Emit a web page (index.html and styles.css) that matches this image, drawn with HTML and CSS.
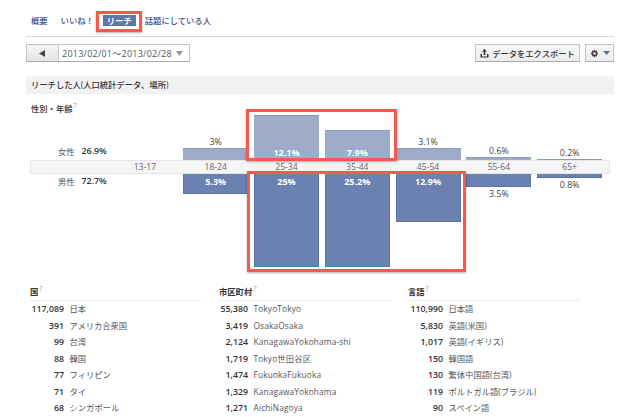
FILE: index.html
```html
<!DOCTYPE html>
<html lang="ja">
<head>
<meta charset="utf-8">
<title>リーチ</title>
<link rel="stylesheet" href="styles.css">
</head>
<body>
<div class="page">
  <nav class="tabs">
    <a class="tab">概要</a>
    <a class="tab">いいね！</a>
    <a class="tab active">リーチ</a>
    <a class="tab">話題にしている人</a>
    <span class="mark mark-tab"></span>
  </nav>
  <div class="toolbar">
    <div class="range">
      <span class="back"><svg width="9" height="9" viewBox="0 0 9 9"><path d="M1 4.500 7 1v7z" fill="#444"/></svg></span>
      <span class="dates">2013/02/01～2013/02/28</span>
      <svg class="caret" width="7" height="5" viewBox="0 0 7 5"><path d="M0 0h7L3.500 5z" fill="#999"/></svg>
    </div>
    <div class="actions">
      <button class="btn export"><svg width="9" height="9" viewBox="0 0 9 9"><path d="M4.500 0 7 2.600H5.300V6H3.700V2.600H2zM.5 5H2v2.500h5V5h1.500v3.500H.5z" fill="#333"/></svg>データをエクスポート</button>
      <button class="btn gear"><svg width="9" height="9" viewBox="0 0 9 9"><path d="M4 0h1l.3 1.300 1.200-.6.8.8-.6 1.200L8 3v1.500l-1.300.3.600 1.200-.8.800-1.200-.6L5 7.500 4 7.500l-.3-1.300-1.200.6-.8-.8.600-1.200L1 4.500V3l1.300-.3-.6-1.200.8-.8 1.200.6z" transform="translate(0 .7)" fill="#444"/><circle cx="4.500" cy="4.450" r="1.200" fill="#eee"/></svg><svg width="7" height="4" viewBox="0 0 7 4"><path d="M0 0h7L3.500 4z" fill="#5a6f9f"/></svg></button>
    </div>
  </div>
  <h2 class="section">リーチした人(人口統計データ、場所)</h2>
  <h3 class="subhead">性別・年齢<sup>?</sup></h3>

  <div class="chart">
    <div class="row female">
      <div class="legend"><span>女性</span><b>26.9%</b></div>
      <div class="col"></div>
      <div class="col"><span class="out">3%</span><div class="bar f h12"></div></div>
      <div class="col"><div class="bar f h45"><b>12.1%</b></div></div>
      <div class="col"><div class="bar f h30"><b>7.9%</b></div></div>
      <div class="col"><span class="out">3.1%</span><div class="bar f h12"></div></div>
      <div class="col"><span class="out">0.6%</span><div class="bar f h3"></div></div>
      <div class="col"><span class="out">0.2%</span><div class="bar f h1"></div></div>
    </div>
    <div class="ages">
      <div class="legend"></div>
      <span>13-17</span><span>18-24</span><span>25-34</span><span>35-44</span><span>45-54</span><span>55-64</span><span>65+</span>
    </div>
    <div class="row male">
      <div class="legend"><span>男性</span><b>72.7%</b></div>
      <div class="col"></div>
      <div class="col"><div class="bar m h20"><b>5.3%</b></div></div>
      <div class="col"><div class="bar m h93"><b>25%</b></div></div>
      <div class="col"><div class="bar m h93"><b>25.2%</b></div></div>
      <div class="col"><div class="bar m h48"><b>12.9%</b></div></div>
      <div class="col"><div class="bar m h13"></div><span class="out below">3.5%</span></div>
      <div class="col"><div class="bar m h4"></div><span class="out below">0.8%</span></div>
    </div>
    <span class="mark mark-f"></span>
    <span class="mark mark-m"></span>
  </div>

  <div class="lists">
    <section class="list l1">
      <h3>国<sup>?</sup></h3>
      <ul>
        <li><b>117,089</b><span>日本</span></li>
        <li><b>391</b><span>アメリカ合衆国</span></li>
        <li><b>99</b><span>台湾</span></li>
        <li><b>88</b><span>韓国</span></li>
        <li><b>77</b><span>フィリピン</span></li>
        <li><b>71</b><span>タイ</span></li>
        <li><b>68</b><span>シンガポール</span></li>
      </ul>
    </section>
    <section class="list l2">
      <h3>市区町村<sup>?</sup></h3>
      <ul>
        <li><b>55,380</b><span>TokyoTokyo</span></li>
        <li><b>3,419</b><span>OsakaOsaka</span></li>
        <li><b>2,124</b><span>KanagawaYokohama-shi</span></li>
        <li><b>1,719</b><span>Tokyo世田谷区</span></li>
        <li><b>1,474</b><span>FukuokaFukuoka</span></li>
        <li><b>1,329</b><span>KanagawaYokohama</span></li>
        <li><b>1,271</b><span>AichiNagoya</span></li>
      </ul>
    </section>
    <section class="list l3">
      <h3>言語<sup>?</sup></h3>
      <ul>
        <li><b>110,990</b><span>日本語</span></li>
        <li><b>5,830</b><span>英語(米国)</span></li>
        <li><b>1,017</b><span>英語(イギリス)</span></li>
        <li><b>150</b><span>韓国語</span></li>
        <li><b>130</b><span>繁体中国語(台湾)</span></li>
        <li><b>119</b><span>ポルトガル語(ブラジル)</span></li>
        <li><b>90</b><span>スペイン語</span></li>
      </ul>
    </section>
  </div>
</div>
</body>
</html>
```
FILE: styles.css
```css
* { box-sizing: border-box; }
html, body { margin: 0; height: 417px; overflow: hidden; background: #fff; }
body { font-family: "Open Sans", "Noto Sans CJK JP", sans-serif; font-size: 8.3px; color: #444; }
.page { width: 640px; padding: 0 26px; }

.tabs { position: relative; display: flex; align-items: center; height: 37px; padding: 5px 0 0 5px; border-bottom: 1px solid #d8d8d8; color: #3b5090; font-weight: 500; }
.tab { display: block; line-height: 11px; }
.tab:nth-child(1) { margin-right: 13px; }
.tab:nth-child(2) { margin-right: 9px; }
.tab:nth-child(3) { margin-right: 9px; }
.tab.active { width: 33px; background: #5d77ab; color: #fff; font-weight: 700; text-align: center; }
.mark { position: absolute; border: 3px solid #f9584f; box-shadow: 0 1px 2px rgba(0,0,0,.3); }
.mark-tab { left: 70px; top: 11px; width: 46px; height: 21px; }

.toolbar { display: flex; justify-content: space-between; margin-top: 7px; height: 18px; }
.range { display: flex; align-items: center; width: 164px; border: 1px solid #c4c4c4; border-bottom-color: #aaa; background: #fff; }
.back { display: flex; align-items: center; justify-content: center; width: 32px; height: 100%; border-right: 1px solid #c4c4c4; background: linear-gradient(#f5f5f5, #e4e4e4); }
.dates { margin-left: 3px; flex: 1; font-size: 9px; color: #555; letter-spacing: .25px; white-space: nowrap; }
.caret { margin-right: 6px; }
.actions { display: flex; gap: 5px; }
.btn { display: flex; align-items: center; justify-content: center; gap: 3px; height: 18px; padding: 0; border: 1px solid #c4c4c4; border-bottom-color: #aaa; background: linear-gradient(#f8f8f8, #ececec); font: inherit; font-weight: 500; color: #333; }
.export { width: 105px; }
.gear { width: 29px; gap: 4px; }

.section { margin: 14px 0 0; height: 18px; padding-left: 5px; background: #f2f2f2; font-size: 8.3px; font-weight: 500; line-height: 18px; color: #333; }
.subhead { margin: 9px 0 0 5px; height: 12px; font-size: 8.3px; font-weight: 500; line-height: 12px; color: #333; }
sup { font-size: 7.5px; font-weight: 400; color: #999; line-height: 0; margin-left: 1px; }

.chart { position: relative; margin-top: -6px; }
.row, .ages { display: grid; grid-template-columns: 80.600px repeat(7, 65px); column-gap: 5.800px; }
.female { height: 51px; align-items: end; }
.male { height: 100px; align-items: start; }
.col { display: flex; flex-direction: column; align-items: stretch; text-align: center; }
.out { font-size: 8.800px; line-height: 11px; color: #444; }
.below { margin-top: 2px; }
.bar { color: #fff; text-align: center; font-size: 9px; }
.bar.f { display: flex; align-items: flex-end; justify-content: center; padding-bottom: 2px; background: #9eacca; border-top: 1px solid #8c9bc0; }
.bar.m { padding-top: 2px; line-height: 11px; background: #6a81b1; border: 1px solid #5a72a6; border-top: 0; }
.h1 { height: 1px; padding: 0 !important; } .h3 { height: 3px; padding: 0 !important; } .h4 { height: 4px; padding: 0 !important; } .h12 { height: 12px; } .h13 { height: 13px; }
.h20 { height: 20px; } .h30 { height: 30px; } .h45 { height: 45px; } .h48 { height: 48px; } .h93 { height: 93px; }
.bar.f b { line-height: 11px; font-weight: 700; }

.legend { display: flex; justify-content: flex-end; gap: 7px; color: #555; line-height: 11px; }
.legend b { color: #333; width: 25px; font-weight: 600; font-size: 8.800px; }
.female .legend { align-self: end; transform: translateY(-3px); }
.male .legend { padding-top: 2px; }

.ages { height: 14px; margin: 0 4px; background: #f5f5f5; box-shadow: inset 0 0 0 1px #e6e6e6; grid-template-columns: 76.600px repeat(7, 65px); line-height: 14px; text-align: center; color: #666; font-size: 8.600px; }

.mark-f { left: 219.500px; top: 0; width: 151px; height: 52px; }
.mark-m { left: 221px; top: 62px; width: 219px; height: 101px; }

.lists { display: flex; margin-top: 12px; padding-left: 4px; }
.list { width: 172px; margin-right: 17px; }
.list h3 { margin: 0; height: 15px; border-bottom: 1px solid #eee; font-size: 8.3px; font-weight: 600; line-height: 12px; color: #333; }
.list ul { list-style: none; margin: 0; padding: 0; }
.list li { display: flex; gap: 5.500px; height: 16.550px; line-height: 16.550px; }
.list b { flex: none; text-align: right; font-weight: 600; font-size: 8.800px; color: #333; }
.list span { white-space: nowrap; color: #555; }
.l1 b { width: 34px; }
.l2 b { width: 29px; }
.l2 span { letter-spacing: .15px; }
.l3 b { width: 35px; }
```
